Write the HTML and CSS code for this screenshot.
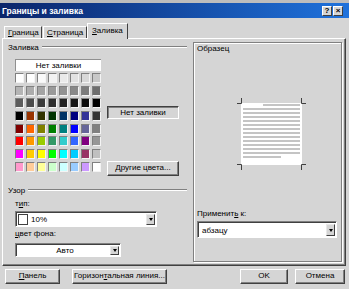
FILE: index.html
```html
<!DOCTYPE html>
<html>
<head>
    <meta charset="utf-8">
    <title>Границы и заливка</title>
    <link rel="stylesheet" href="styles.css">
</head>
<body>
<div class="dialog">
    <div class="top-strip"></div>
    <div class="titlebar">
        <span class="title">Границы и заливка</span>
        <span class="tb-btn">?</span>
        <span class="tb-btn close">×</span>
    </div>

    <div class="tabs">
        <div class="tab tab-border"><u>Г</u>раница</div>
        <div class="tab tab-page"><u>С</u>траница</div>
        <div class="tab tab-fill active"><u>З</u>аливка</div>
    </div>

    <div class="panel">
        <div class="left">
            <div class="group-head"><span>Заливка</span><i></i></div>
            <div class="fill-row">
                <div class="palette">
                    <div class="no-fill">Нет заливки</div>
                    <div class="swatches" id="swatches"></div>
                </div>
                <div class="fill-side">
                    <div class="current">Нет заливки</div>
                    <div class="btn more"><u>Д</u>ругие цвета...</div>
                </div>
            </div>

            <div class="group-head pattern-head"><span>Узор</span><i></i></div>
            <div class="field-label lbl-type">т<u>и</u>п:</div>
            <div class="select select-type">
                <span class="swatch-box"></span>
                <span class="value">10%</span>
                <span class="arrow"></span>
            </div>
            <div class="field-label lbl-color"><u>ц</u>вет фона:</div>
            <div class="select select-color">
                <span class="value centered">Авто</span>
                <span class="arrow"></span>
            </div>
        </div>

        <div class="sample">
            <div class="sample-title">Образец</div>
            <svg class="preview" width="72" height="72" viewBox="0 0 72 72">
                <rect x="4" y="5" width="61" height="62" fill="#fff"/>
                <path d="M4.5 0v5.5H0M64.5 0v5.5H69M4.5 72v-5.5H0M64.5 72v-5.5H69" fill="none" stroke="#404040" stroke-width="1"/>
                <g stroke="#c4c4c4" stroke-width="2">
                    <line x1="26" y1="7" x2="63" y2="7"/>
                    <line x1="6" y1="11" x2="63" y2="11"/>
                    <line x1="6" y1="15" x2="63" y2="15"/>
                    <line x1="6" y1="19" x2="63" y2="19"/>
                    <line x1="6" y1="23" x2="63" y2="23"/>
                    <line x1="6" y1="27" x2="63" y2="27"/>
                    <line x1="6" y1="31" x2="63" y2="31"/>
                    <line x1="6" y1="35" x2="63" y2="35"/>
                    <line x1="6" y1="39" x2="63" y2="39"/>
                    <line x1="6" y1="43" x2="63" y2="43"/>
                    <line x1="6" y1="47" x2="63" y2="47"/>
                    <line x1="6" y1="51" x2="63" y2="51"/>
                    <line x1="6" y1="55" x2="63" y2="55"/>
                    <line x1="6" y1="59" x2="44" y2="59"/>
                </g>
            </svg>
            <div class="field-label lbl-apply">Применит<u>ь</u> к:</div>
            <div class="select select-apply">
                <span class="value">абзацу</span>
                <span class="arrow"></span>
            </div>
        </div>
    </div>

    <div class="buttons">
        <div class="btn btn-panel"><u>П</u>анель</div>
        <div class="btn btn-line">Горизон<u>т</u>альная линия...</div>
        <div class="btn btn-ok">OK</div>
        <div class="btn btn-cancel">Отмена</div>
    </div>
</div>

<script>
    // standard office fill palette, 8 x 8
    const colors = [
        '#ffffff', '#ffffff', '#fafafa', '#f2f2f2', '#eaeaea', '#e2e2e2', '#d8d8d8', '#c8c8c8',
        '#b4b4b4', '#acacac', '#a4a4a4', '#9a9a9a', '#929292', '#888888', '#7c7c7c', '#6e6e6e',
        '#5c5c5c', '#4c4c4c', '#3c3c3c', '#2e2e2e', '#222222', '#161616', '#0c0c0c', '#000000',
        '#000000', '#993300', '#333300', '#003300', '#003366', '#000080', '#333399', '#333333',
        '#800000', '#ff6600', '#808000', '#008000', '#008080', '#0000ff', '#666699', '#808080',
        '#ff0000', '#ff9900', '#99cc00', '#339966', '#33cccc', '#3366ff', '#800080', '#969696',
        '#ff00ff', '#ffcc00', '#ffff00', '#00ff00', '#00ffff', '#00ccff', '#993366', '#c0c0c0',
        '#ff99cc', '#ffcc99', '#ffff99', '#ccffcc', '#ccffff', '#99ccff', '#cc99ff', '#ffffff'
    ];
    const grid = document.getElementById('swatches');
    colors.forEach(c => {
        const cell = document.createElement('div');
        cell.className = 'cell';
        cell.style.backgroundColor = c;
        grid.appendChild(cell);
    });
</script>
</body>
</html>
```

FILE: styles.css
```css
body {
    margin: 0;
    font-family: "Liberation Sans", Arial, sans-serif;
    font-size: 8px;
    color: #000;
    background: #d5d5d5;
}
u {
    text-decoration: underline;
}
.dialog {
    width: 349px;
    height: 289px;
    overflow: hidden;
    background: #d5d5d5;
}
.top-strip {
    height: 3px;
    background: #bdbdbd;
}
.titlebar {
    height: 15px;
    display: flex;
    align-items: center;
    padding: 0 6px 0 2px;
    background: linear-gradient(to right, #0a246a, #1f72dc);
}
.title {
    flex: 1;
    color: #fff;
    font-weight: bold;
    font-size: 8.5px;
}
.tb-btn {
    width: 8px;
    height: 8px;
    margin-left: 1px;
    background: #d5d5d5;
    border: 1px solid;
    border-color: #fff #404040 #404040 #fff;
    font-weight: bold;
    font-size: 8px;
    line-height: 8px;
    text-align: center;
}

/* tabs */
.tabs {
    display: flex;
    align-items: flex-end;
    height: 16px;
    margin-top: 4px;
    padding-left: 4px;
}
.tab {
    height: 11px;
    line-height: 11px;
    border: 1px solid;
    border-color: #fff #404040 transparent #fff;
    border-bottom: none;
    padding-left: 3px;
}
.tab-border { width: 33px; }
.tab-page { width: 39px; margin-left: 1px; }
.tab-fill { width: 35px; padding-left: 4px; }
.tab.active {
    height: 15px;
    line-height: 14px;
    margin-bottom: -1px;
    background: #d5d5d5;
    position: relative;
    z-index: 1;
}

/* panel */
.panel {
    display: flex;
    gap: 6px;
    height: 228px;
    box-sizing: border-box;
    margin: 0 3px 0 2px;
    padding: 3px 3px 3px 5px;
    border: 1px solid;
    border-color: #fff #404040 #404040 #fff;
    box-shadow: inset -1px -1px #808080;
}
.left {
    width: 179px;
    display: flex;
    flex-direction: column;
}
.group-head {
    display: flex;
    align-items: center;
    height: 10px;
}
.group-head span {
    padding-right: 3px;
}
.group-head i {
    flex: 1;
    border-top: 1px solid #808080;
    border-bottom: 1px solid #fff;
}
.pattern-head {
    margin-top: 9px;
}

.fill-row {
    display: flex;
    margin: 7px 0 0 7px;
}
.palette {
    width: 86px;
}
.no-fill {
    height: 11px;
    line-height: 11px;
    text-align: center;
    background: #fff;
    border-top: 1px solid #909090;
    border-left: 1px solid #909090;
    margin-bottom: 2px;
}
.swatches {
    display: grid;
    grid-template-columns: repeat(8, 1fr);
    grid-auto-rows: 10px;
    column-gap: 1.6px;
    row-gap: 2.7px;
}
.cell {
    border: 1px solid;
    border-color: #808080 #f4f4f4 #f4f4f4 #808080;
}
.fill-side {
    width: 72px;
    margin-left: 6px;
    display: flex;
    flex-direction: column;
}
.current {
    height: 11px;
    line-height: 11px;
    margin-top: 47px;
    text-align: center;
    border: 1px solid;
    border-color: #404040 #fff #fff #404040;
    box-shadow: inset 1px 1px #808080;
}

.btn {
    box-sizing: border-box;
    height: 15px;
    line-height: 12px;
    text-align: center;
    background: #d5d5d5;
    border: 1px solid;
    border-color: #fff #404040 #404040 #fff;
    box-shadow: inset -1px -1px #808080;
}
.more {
    margin-top: 42px;
}

.field-label {
    height: 8px;
    line-height: 8px;
    margin-left: 7px;
}
.lbl-type { margin-top: 5px; }
.lbl-color { margin-top: 3px; }

.select {
    display: flex;
    align-items: center;
    box-sizing: border-box;
    background: #fff;
    border: 1px solid;
    border-color: #808080 #fff #fff #808080;
    box-shadow: inset 1px 1px #404040;
    padding: 2px 1px 1px 2px;
}
.select .value {
    flex: 1;
    padding-left: 2px;
}
.select .value.centered {
    text-align: center;
}
.arrow {
    box-sizing: border-box;
    width: 9px;
    height: 100%;
    background: #d5d5d5;
    border: 1px solid;
    border-color: #e8e8e8 #404040 #404040 #e8e8e8;
    display: flex;
    align-items: center;
    justify-content: center;
}
.arrow::after {
    content: "";
    border-left: 2.5px solid transparent;
    border-right: 2.5px solid transparent;
    border-top: 3px solid #000;
}
.select-type {
    width: 142px;
    height: 16px;
    margin: 3px 0 0 7px;
}
.swatch-box {
    width: 10px;
    height: 11px;
    box-sizing: border-box;
    border: 1px solid #404040;
    background: #fff;
}
.select-type .value {
    padding-left: 3px;
}
.select-color {
    width: 106px;
    height: 14px;
    margin: 5px 0 0 7px;
}

/* sample box */
.sample {
    flex: 1;
    display: flex;
    flex-direction: column;
    border: 1px solid #808080;
    box-shadow: inset 1px 1px #fff, 1px 1px #fff;
    padding: 1px 3px 0 3px;
}
.sample-title {
    height: 10px;
    line-height: 10px;
}
.preview {
    display: block;
    margin: 44px 0 0 40px;
}
.lbl-apply {
    margin: 40px 0 0 0;
}
.select-apply {
    height: 17px;
    margin-top: 3px;
    margin-right: 1px;
}

/* bottom buttons */
.buttons {
    display: flex;
    margin-top: 3px;
    padding: 0 4px 0 5px;
}
.btn-panel { width: 55px; }
.btn-line { width: 95px; margin-left: 12px; }
.btn-ok { width: 48px; margin-left: auto; }
.btn-cancel { width: 50px; margin-left: 7px; }
```
